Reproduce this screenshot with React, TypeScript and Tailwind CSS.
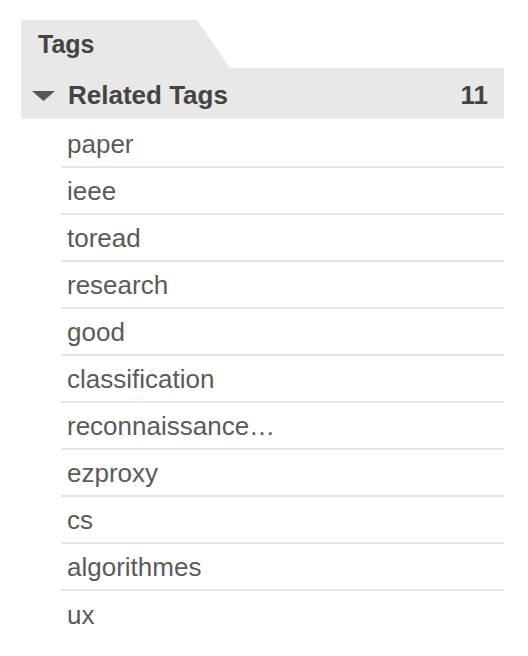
const tags = [
  "paper",
  "ieee",
  "toread",
  "research",
  "good",
  "classification",
  "reconnaissance…",
  "ezproxy",
  "cs",
  "algorithmes",
  "ux",
];

export default function App() {
  return (
    <div className="min-h-screen bg-white pt-[20px] pl-[21px] font-['Liberation_Sans',Arial,sans-serif]">
      <div className="w-[483px]">
        <div className="flex h-[48px] w-[209px] items-center bg-[#e8e8e8] pl-[17px] [clip-path:polygon(0_0,176px_0,209px_100%,0_100%)]">
          <span className="text-[25px] font-bold leading-none text-[#444]">Tags</span>
        </div>
        <div className="flex h-[51px] items-center bg-[#e8e8e8] pl-[11px] pr-[16px] pt-[3px]">
          <svg width="23" height="10" viewBox="0 0 23 10" className="mr-[13px] mt-[2px]">
            <polygon points="0,0 23,0 11.5,10" fill="#555" />
          </svg>
          <span className="flex-1 text-[26px] font-bold leading-none text-[#444]">Related Tags</span>
          <span className="text-[26px] font-bold leading-none text-[#444]">11</span>
        </div>
        <ul className="ml-[40px] pt-[2px]">
          {tags.map((t, i) => (
            <li
              key={t}
              className={`flex h-[47px] items-center pl-[6px] text-[26px] leading-none text-[#5a5a5a] ${
                i < tags.length - 1 ? "border-b-2 border-[#e6e6e6]" : ""
              }`}
            >
              {t}
            </li>
          ))}
        </ul>
      </div>
    </div>
  );
}
